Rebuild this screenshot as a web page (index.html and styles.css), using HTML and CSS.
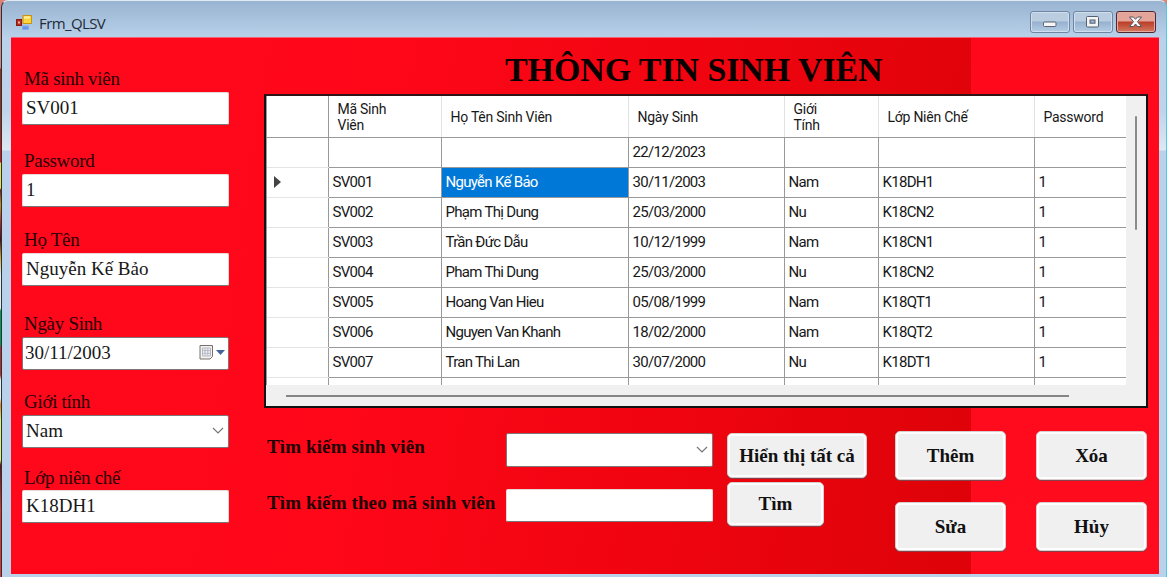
FILE: index.html
```
<!DOCTYPE html>
<html lang="vi">
<head>
<meta charset="utf-8">
<title>Frm_QLSV</title>
<link rel="stylesheet" href="styles.css">
</head>
<body>
<div class="window">
  <header class="titlebar">
    <svg class="app-icon" width="16" height="16" viewBox="0 0 16 16"><rect x=".5" y="5.500" width="5" height="6" fill="#b52a20" stroke="#861c14"/><rect x="2" y="7.500" width="2" height="2" fill="#f4b0a0"/><rect x="7" y="1.500" width="8.500" height="8" fill="#ffd33c" stroke="#c99413"/><path d="M8 2.500h6v2H8z" fill="#fff0a6"/><rect x="6.500" y="12" width="6" height="3.500" fill="#6794e4" stroke="#86aceb"/></svg>
    <span class="caption">Frm_QLSV</span>
    <div class="controls">
      <span class="control"><svg width="38" height="20" viewBox="0 0 38 20"><rect x="12.500" y="10" width="12.500" height="4.500" rx="1" fill="#f6f6f6" stroke="#5a6472"/></svg></span>
      <span class="control"><svg width="38" height="20" viewBox="0 0 38 20"><rect x="12.500" y="4.500" width="12" height="10.500" rx="1" fill="#f4f4f4" stroke="#536070"/><rect x="16" y="8" width="5" height="3.200" fill="#9cb4ce" stroke="#536070"/></svg></span>
      <span class="control close"><svg width="38" height="20" viewBox="0 0 38 20"><path d="M12.500 5h4l2 2.300 2-2.300h4l-4 4.700 4 4.800h-4l-2-2.500-2 2.500h-4l4-4.800z" fill="#f8f8f8" stroke="#59555f"/></svg></span>
    </div>
  </header>
  <main class="form">
    <section class="details">
      <label>Mã sinh viên</label><div class="field">SV001</div>
      <label>Password</label><div class="field">1</div>
      <label>Họ Tên</label><div class="field">Nguyễn Kế Bảo</div>
      <label>Ngày Sinh</label><div class="field boxed date">30/11/2003
        <svg width="28" height="18" viewBox="0 0 28 18"><path d="M2 1.500h12.500v11l-2.500 2.500H2z" fill="#f3f1ef" stroke="#77706c"/><path d="M4.500 4h8v8h-8zM4.500 6.600h8M4.500 9.300h8M7 4v8M9.800 4v8" fill="none" stroke="#b5bac7"/><path d="M18 6h9l-4.500 5z" fill="#41659a"/></svg></div>
      <label>Giới tính</label><div class="field boxed combo">Nam
        <svg width="12" height="8" viewBox="0 0 12 8"><path d="M1 1l5 5 5-5" fill="none" stroke="#777" stroke-width="1.200"/></svg></div>
      <label>Lớp niên chế</label><div class="field">K18DH1</div>
    </section>
    <section class="content">
      <h1>THÔNG TIN SINH VIÊN</h1>
      <div class="grid">
        <div class="viewport">
          <table>
            <colgroup><col class="c0"><col class="c1"><col class="c2"><col class="c3"><col class="c4"><col class="c5"><col class="c6"></colgroup>
            <thead><tr><th></th><th>Mã Sinh<br>Viên</th><th>Họ Tên Sinh Viên</th><th>Ngày Sinh</th><th>Giới<br>Tính</th><th>Lớp Niên Chế</th><th>Password</th></tr></thead>
            <tbody>
              <tr><td></td><td></td><td></td><td>22/12/2023</td><td></td><td></td><td></td></tr>
              <tr><td><svg class="marker" width="7" height="12" viewBox="0 0 7 12"><path d="M0 0l7 6-7 6z" fill="#444"/></svg></td><td>SV001</td><td class="selected">Nguyễn Kế Bảo</td><td>30/11/2003</td><td>Nam</td><td>K18DH1</td><td>1</td></tr>
              <tr><td></td><td>SV002</td><td>Phạm Thị Dung</td><td>25/03/2000</td><td>Nu</td><td>K18CN2</td><td>1</td></tr>
              <tr><td></td><td>SV003</td><td>Trần Đức Dẫu</td><td>10/12/1999</td><td>Nam</td><td>K18CN1</td><td>1</td></tr>
              <tr><td></td><td>SV004</td><td>Pham Thi Dung</td><td>25/03/2000</td><td>Nu</td><td>K18CN2</td><td>1</td></tr>
              <tr><td></td><td>SV005</td><td>Hoang Van Hieu</td><td>05/08/1999</td><td>Nam</td><td>K18QT1</td><td>1</td></tr>
              <tr><td></td><td>SV006</td><td>Nguyen Van Khanh</td><td>18/02/2000</td><td>Nam</td><td>K18QT2</td><td>1</td></tr>
              <tr><td></td><td>SV007</td><td>Tran Thi Lan</td><td>30/07/2000</td><td>Nu</td><td>K18DT1</td><td>1</td></tr>
              <tr><td></td><td></td><td></td><td></td><td></td><td></td><td></td></tr>
            </tbody>
          </table>
        </div>
        <div class="vscroll"><i></i></div>
        <div class="hscroll"><i></i></div>
      </div>
      <div class="footer">
        <div class="search">
          <label>Tìm kiếm sinh viên</label><div class="field boxed combo"><svg width="12" height="8" viewBox="0 0 12 8"><path d="M1 1l5 5 5-5" fill="none" stroke="#777" stroke-width="1.200"/></svg></div>
          <label>Tìm kiếm theo mã sinh viên</label><div class="field"></div>
        </div>
        <div class="search-buttons"><button>Hiển thị tất cả</button><button class="find">Tìm</button></div>
        <div class="actions"><button>Thêm</button><button>Xóa</button><button>Sửa</button><button>Hủy</button></div>
      </div>
    </section>
  </main>
</div>
</body>
</html>
```

FILE: styles.css
```
* { box-sizing: border-box; }
body {
  margin: 0;
  width: 1167px;
  height: 577px;
  overflow: hidden;
  padding-left: 1px;
  background: linear-gradient(#dc8278 0 68px, #a32d13 69px 125px, #e80b0b 150px 162px, #f4df3b 163px 188px, #7e1c0c 190px, #d49113 205px, #ca2a24 220px, #5c0b06 240px, #dfa62a 258px, #eee 275px 308px, #079b48 311px 344px, #c92622 348px 375px, #eee 380px 398px, #f17b16 405px, #e8ef68 420px 460px, #760b09 465px, #ef3020 510px 577px);
}
.window {
  display: flex;
  flex-direction: column;
  width: 1166px;
  height: 577px;
  padding: 0 7px 2px 9px;
  border-left: 1px solid #20343e;
  border-right: 1px solid #4ccbe6;
  border-top: 1px solid #dfeaf3;
  border-radius: 7px 7px 0 0;
  background: linear-gradient(#99b4d1 0, #b9d1ea 37px, #bfd4eb 110px, #dce8f4 149px, #b9d1ea 150px);
}
.titlebar { display: flex; height: 36px; flex: none; padding-left: 5px; }
.app-icon { margin-top: 13px; }
.caption {
  margin: 12px 0 0 7px;
  font: 15px/20px "Open Sans", "Noto Sans", sans-serif;
  letter-spacing: -0.6px;
  color: #222b35;
}
.controls { display: flex; gap: 3px; margin: 10px 3px 0 auto; }
.control {
  width: 40px;
  height: 22px;
  border: 1px solid #6e86a2;
  border-radius: 3px;
  box-shadow: inset 0 0 0 1px #d0deed;
  background: linear-gradient(#b9cce0 0 45%, #96b1cf 50%, #b5cde5);
}
.control svg { display: block; }
.close {
  border-color: #512633;
  box-shadow: inset 0 0 0 1px #e6aaa0;
  background: linear-gradient(#e3a499 0 45%, #bb3d28 50%, #d37a60);
}
.form {
  display: flex;
  height: 537px;
  flex: none;
  border-top: 1px solid #f06473;
  background:
    linear-gradient(#ff081c, #ff0c1e) 960px 0 / 200px 100% no-repeat,
    linear-gradient(98deg, #ff081c 0, #ff0719 31%, #ef040f 59%, #df0309 82%);
  font-family: "Liberation Serif", "Times New Roman", serif;
  font-size: 19px;
  color: #080000;
}
.details {
  display: grid;
  grid-template-rows: 26px 33px 49px 33px 46px 33px 51px 33px 45px 33px 42px 33px;
  flex: none;
  align-content: start;
  width: 218px;
  margin: 28px 24px 0 11px;
}
.details label {
  align-self: end;
  line-height: 22px;
  padding: 0 0 2px 2px;
  color: #250004;
  letter-spacing: -0.3px;
}
.details label:last-of-type { padding-bottom: 1px; }
.field {
  display: flex;
  align-items: center;
  width: 207px;
  height: 33px;
  padding: 0 3px 1px;
  border: 1px solid #ead8d8;
  border-bottom-color: #777;
  border-radius: 2px;
  background: #fff;
  color: #171717;
  white-space: nowrap;
}
.boxed { border-color: #817578; }
.field svg { margin-left: auto; }
.combo svg { margin-right: 1px; }
.date { padding: 0 2px 1px; }
.details .field:last-child { margin-top: 0; }
.content { width: 885px; flex: none; }
h1 {
  width: 378px;
  height: 56px;
  margin: 0 0 0 241px;
  padding-top: 11px;
  font-size: 34px;
  line-height: 41px;
  letter-spacing: -0.1px;
  white-space: nowrap;
}
.grid {
  display: grid;
  grid-template: 289px 21px / 860px 20px;
  width: 884px;
  height: 314px;
  border: 2px solid #111;
  border-top-color: #301416;
  background: #f0f0f0;
}
.viewport { overflow: hidden; background: #fff; border-left: 1px solid #999; }
table {
  width: 859px;
  table-layout: fixed;
  border-collapse: collapse;
  font: 15px/16px Roboto, sans-serif;
  letter-spacing: -0.7px;
  color: #181818;
}
.c0 { width: 61px; } .c1 { width: 113px; } .c2 { width: 187px; } .c3 { width: 156px; }
.c4 { width: 94px; } .c5 { width: 156px; } .c6 { width: 92px; }
thead tr { height: 41px; }
tbody tr { height: 30px; }
th {
  padding: 1px 8px 0 9px;
  font-weight: 400;
  font-size: 14px;
  letter-spacing: -0.25px;
  text-align: left;
  border-right: 1px solid #e2e2e2;
  border-bottom: 1px solid #999;
}
td { padding: 0 4px; border-right: 1px solid #999; border-bottom: 1px solid #999; }
td:first-child { padding-left: 7px; border-bottom-color: #e4e4e4; }
th:first-child { border-right-color: #999; }
th:last-child, td:last-child { border-right: 0; }
.marker { display: block; }
.selected { background: #0078d7; color: #fff; }
.vscroll { padding: 20px 0 0 9px; }
.vscroll i { display: block; width: 2px; height: 114px; background: #8a8a8a; border-radius: 1px; }
.hscroll { padding: 10px 0 0 20px; }
.hscroll i { display: block; width: 783px; height: 2px; background: #858585; }
.footer { display: flex; padding: 23px 0 0 2px; font-weight: 700; }
.search {
  display: grid;
  flex: none;
  grid-template: 34px 33px / 240px 207px;
  row-gap: 22px;
  padding-top: 2px;
}
.search label { padding-left: 1px; line-height: 27px; color: #200004; white-space: nowrap; letter-spacing: 0.12px; }
.search .boxed { height: 34px; }
.search-buttons { display: flex; flex: none; flex-direction: column; gap: 4px; margin: 2px 0 0 14px; width: 140px; }
button {
  width: 111px;
  height: 49px;
  padding: 0;
  border: 1px solid #d9cccc;
  border-radius: 5px;
  box-shadow: inset 0 0 0 2px #fdfdfd, 0 1px 0 #86404a;
  background: #f0f0f0;
  font: 700 19px "Liberation Serif", serif;
  color: #111;
  white-space: nowrap;
}
.search-buttons button { width: 140px; height: 45px; }
.search-buttons .find { width: 97px; height: 44px; }
.actions { display: grid; grid-template-columns: 111px 111px; gap: 22px 30px; align-content: start; margin-left: 28px; }
```
